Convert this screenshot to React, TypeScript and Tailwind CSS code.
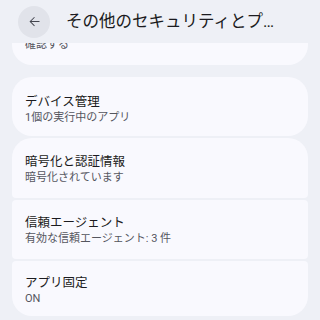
import React from 'react'

interface Item {
  title?: string
  summary: string
  height: string
  pad: string
  shape: string
  gapTop?: string
}

// first row sits under the header, only the bottom of its summary shows
const items: Item[] = [
  { summary: '確認する', height: 'h-[60px]', pad: 'pt-[32px]', shape: 'rounded-t-[4px] rounded-b-[20px]' },
  { title: 'デバイス管理', summary: '1個の実行中のアプリ', height: 'h-[59px]', pad: 'pt-[16px]', shape: 'rounded-[20px]', gapTop: 'mt-[10px]' },
  { title: '暗号化と認証情報', summary: '暗号化されています', height: 'h-[60px]', pad: 'pt-[15px]', shape: 'rounded-t-[20px] rounded-b-[4px]' },
  { title: '信頼エージェント', summary: '有効な信頼エージェント: 3 件', height: 'h-[59px]', pad: 'pt-[14px]', shape: 'rounded-[4px]' },
  { title: 'アプリ固定', summary: 'ON', height: 'h-[55px]', pad: 'pt-[13px]', shape: 'rounded-t-[4px] rounded-b-[20px]' },
]

function ArrowBack() {
  return (
    <svg viewBox="0 0 24 24" className="h-[15px] w-[15px]" fill="#44464f">
      <path d="M20 11.25H6.9l5.6-5.6L11.44 4.6 4 12l7.44 7.4 1.06-1.05-5.6-5.6H20z" />
    </svg>
  )
}

export default function App() {
  return (
    <div
      className="flex h-[320px] w-[320px] flex-col overflow-hidden bg-[#eef0f6]"
      style={{ fontFamily: 'Roboto, "Noto Sans CJK JP", sans-serif' }}
    >
      <header className="flex h-[43px] shrink-0 items-center">
        <button className="ml-[18px] flex h-[32px] w-[32px] items-center justify-center rounded-full bg-[#e1e3ea]">
          <ArrowBack />
        </button>
        <h1 className="ml-[16px] whitespace-nowrap text-[16.5px] leading-[22px] text-[#1b1b20]">
          その他のセキュリティとプ…
        </h1>
      </header>

      <div className="flex-1 overflow-hidden px-3">
        <div className="-mt-[38px] flex flex-col gap-[2px]">
          {items.map((it) => (
            <div
              key={it.summary}
              className={`${it.height} ${it.pad} ${it.shape} ${it.gapTop ?? ''} shrink-0 bg-[#f9f9fe] px-[13px]`}
            >
              {it.title && <div className="text-[12.5px] leading-[17px] text-[#1b1b20]">{it.title}</div>}
              <div className="text-[11px] leading-[15px] text-[#55565e]">{it.summary}</div>
            </div>
          ))}
        </div>
      </div>
    </div>
  )
}
